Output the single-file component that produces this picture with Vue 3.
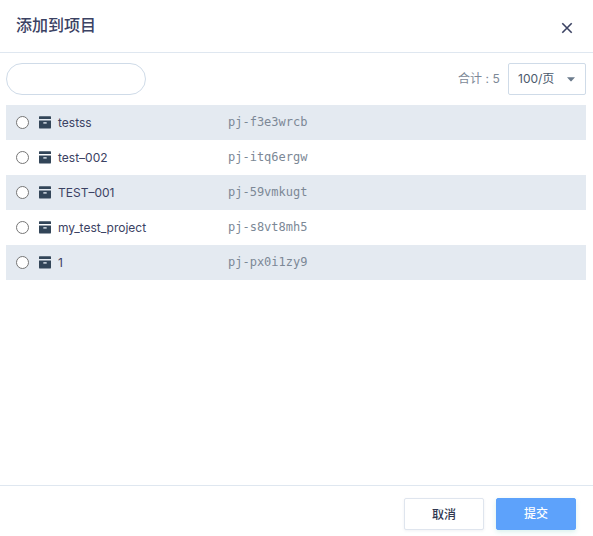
<script setup>
import { ref } from 'vue'

const selected = ref('')
const keyword = ref('')
const projects = [
  { id: 'pj-f3e3wrcb', name: 'testss' },
  { id: 'pj-itq6ergw', name: 'test–002' },
  { id: 'pj-59vmkugt', name: 'TEST–001' },
  { id: 'pj-s8vt8mh5', name: 'my_test_project' },
  { id: 'pj-px0i1zy9', name: '1' },
]
</script>

<template>
  <div class="modal">
    <header class="header">
      <h1 class="title">添加到项目</h1>
      <button class="close" aria-label="关闭">
        <svg width="12" height="12" viewBox="0 0 12 12">
          <path d="M1.3 1.3 10.7 10.7M10.7 1.3 1.3 10.7" fill="none" stroke="#3b4263" stroke-width="1.6" />
        </svg>
      </button>
    </header>
    <main class="content">
      <div class="toolbar">
        <input v-model="keyword" class="search" type="text" />
        <div class="paging">
          <span class="total">合计 : 5</span>
          <button class="select">
            <span>100/页</span>
            <svg width="8" height="5" viewBox="0 0 8 5"><path d="M0 .3h8L4.6 4.1q-.6.6-1.2 0z" fill="#6b7b8c" /></svg>
          </button>
        </div>
      </div>
      <label v-for="p in projects" :key="p.id" class="row">
        <input v-model="selected" class="radio" type="radio" name="project" :value="p.id" />
        <svg class="icon" width="12" height="13" viewBox="0 0 12 13">
          <path d="M.5 .2h11q.5 0 .5.5V3.1H0V.7Q0 .2 .5 .2z" fill="#324558" />
          <path d="M0 4.4h12v7q0 1.2-1.2 1.2H1.2Q0 12.6 0 11.4z" fill="#324558" />
          <rect x="4.3" y="6" width="3.4" height="1.8" rx=".3" fill="#bcc6d0" />
        </svg>
        <span class="name">{{ p.name }}</span>
        <span class="id">{{ p.id }}</span>
      </label>
    </main>
    <footer class="footer">
      <button class="btn">取消</button>
      <button class="btn primary">提交</button>
    </footer>
  </div>
</template>

<style>
body {
  background: #fff;
}
</style>

<style scoped>
* {
  box-sizing: border-box;
}
.modal {
  display: flex;
  flex-direction: column;
  height: 536px;
  overflow: hidden;
  background: #fff;
  color: #3b4263;
  font: 12px/20px Inter, "Noto Sans CJK SC", sans-serif;
}
button {
  padding: 0;
  border: 0;
  background: #fff;
  font: inherit;
  color: inherit;
}
.header {
  display: flex;
  align-items: center;
  justify-content: space-between;
  height: 53px;
  padding: 0 20px 0 16px;
  border-bottom: 1px solid #dfe7f0;
}
.title {
  margin: 0 0 4px;
  font: 500 16px/24px "Noto Sans CJK SC", sans-serif;
}
.close {
  display: flex;
  margin-top: 4px;
}
.content {
  flex: 1;
  padding: 10px 7px 0 6px;
}
.toolbar {
  display: flex;
  justify-content: space-between;
  height: 32px;
  margin-bottom: 10px;
}
.search {
  width: 140px;
  height: 32px;
  padding: 0 14px;
  border: 1px solid #cfdbe8;
  border-radius: 16px;
  outline: 0;
}
.paging {
  display: flex;
  align-items: center;
  gap: 8px;
}
.total {
  color: #7d8997;
  letter-spacing: 0.1px;
}
.select {
  display: flex;
  align-items: center;
  justify-content: space-between;
  width: 78px;
  height: 32px;
  padding: 0 10px 0 9px;
  border: 1px solid #cfdbe8;
  border-radius: 2px;
  color: #4b5a6c;
}
.row {
  display: flex;
  align-items: center;
  height: 35px;
  padding-left: 10px;
}
.row:nth-of-type(odd) {
  background: #e4eaf1;
}
.radio {
  appearance: none;
  width: 13px;
  height: 13px;
  margin: 0 10px 0 0;
  border: 1px solid #767676;
  border-radius: 50%;
  background: #fff;
}
.icon {
  margin-right: 7px;
}
.name {
  width: 170px;
}
.id {
  padding-bottom: 1px;
  color: #7c8896;
  font-family: "DejaVu Sans Mono", monospace;
}
.footer {
  display: flex;
  justify-content: flex-end;
  gap: 12px;
  height: 51px;
  padding: 12px 17px 0;
  border-top: 1px solid #dfe7f0;
}
.btn {
  width: 80px;
  height: 32px;
  padding-top: 2px;
  border: 1px solid #dfe5ee;
  border-radius: 2px;
  box-shadow: 0 1px 3px rgba(60, 80, 110, 0.08);
  color: #303750;
  font-weight: 500;
}
.primary {
  padding-top: 0;
  border-color: #5da2fb;
  background: #5da2fb;
  box-shadow: 0 2px 5px rgba(60, 180, 160, 0.2);
  color: #fff;
}
</style>
